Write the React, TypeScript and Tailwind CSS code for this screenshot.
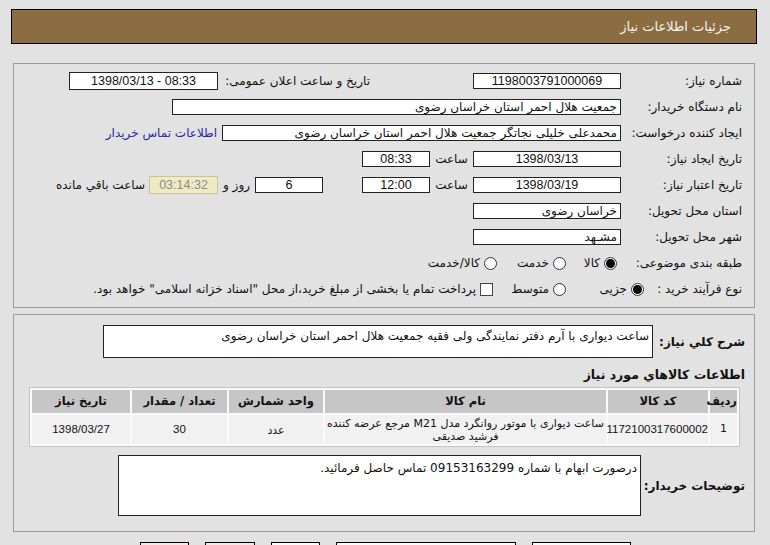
import React from "react";

function Radio({ checked }: { checked?: boolean }) {
  return (
    <span className="flex h-[13px] w-[13px] shrink-0 items-center justify-center rounded-full border border-[#333] bg-white">
      {checked && <span className="h-[9px] w-[9px] rounded-full bg-black" />}
    </span>
  );
}

function Box({ w, children, center, h = "h-[16px]" }: { w: string; children?: React.ReactNode; center?: boolean; h?: string }) {
  return (
    <div
      className={`${w} ${h} flex shrink-0 items-center overflow-hidden whitespace-nowrap border border-[#222] bg-white px-[3px] leading-none ${
        center ? "justify-center" : "justify-start"
      }`}
    >
      {children}
    </div>
  );
}

function Num({ children, small }: { children: React.ReactNode; small?: boolean }) {
  return (
    <span dir="ltr" className={`font-['Liberation_Sans',sans-serif] ${small ? "text-[11.5px]" : "text-[12.5px]"}`}>
      {children}
    </span>
  );
}

function Label({ w, children }: { w: string; children: React.ReactNode }) {
  return <div className={`${w} shrink-0 whitespace-nowrap text-right`}>{children}</div>;
}

const cols = [
  { title: "ردیف", w: "w-[27px]" },
  { title: "کد کالا", w: "w-[100px]" },
  { title: "نام کالا", w: "w-[281px]" },
  { title: "واحد شمارش", w: "w-[94px]" },
  { title: "تعداد / مقدار", w: "w-[95px]" },
  { title: "تاریخ نیاز", w: "w-[98px]" },
];

export default function App() {
  return (
    <div
      dir="rtl"
      className="relative h-[545px] w-[770px] overflow-hidden bg-[#e2e2e2] pt-[9px] font-['Tahoma','DejaVu_Sans',sans-serif] text-[12px] text-[#111]"
    >
      {/* header bar */}
      <div className="ml-[11px] mr-[13px] flex h-[35px] items-center border border-black bg-[#8c6d41] pr-[25px] text-[13px] text-[#f3f3f3]">
        جزئیات اطلاعات نیاز
      </div>

      {/* main info panel */}
      <div className="ml-[13px] mr-[15px] mt-[19px] h-[245px] border border-[#9c9c9c] pr-[12px] pt-[4px]">
        <div className="flex h-[26px] items-center">
          <Label w="w-[121px]">شماره نیاز:</Label>
          <Box w="w-[148px]" center><Num>1198003791000069</Num></Box>
          <Label w="w-[138px] mr-[103px]">تاریخ و ساعت اعلان عمومی:</Label>
          <div className="mr-[14px]">
            <Box w="w-[149px]" h="h-[18px]" center>
              <Num>1398/03/13 - 08:33</Num>
            </Box>
          </div>
        </div>

        <div className="flex h-[26px] items-center">
          <Label w="w-[121px]">نام دستگاه خریدار:</Label>
          <Box w="w-[449px]">جمعیت هلال احمر استان خراسان رضوی</Box>
        </div>

        <div className="flex h-[26px] items-center">
          <Label w="w-[121px]">ایجاد کننده درخواست:</Label>
          <Box w="w-[399px]">محمدعلی خلیلی نجاتگر جمعیت هلال احمر استان خراسان رضوی</Box>
          <a className="mr-[5px] whitespace-nowrap text-[#2a2aa0]">اطلاعات تماس خریدار</a>
        </div>

        <div className="flex h-[26px] items-center">
          <Label w="w-[121px]">تاریخ ایجاد نیاز:</Label>
          <Box w="w-[148px]" center><Num>1398/03/13</Num></Box>
          <div className="w-[43px] shrink-0 text-center">ساعت</div>
          <Box w="w-[68px]" center><Num>08:33</Num></Box>
        </div>

        <div className="flex h-[26px] items-center">
          <Label w="w-[121px]">تاریخ اعتبار نیاز:</Label>
          <Box w="w-[148px]" center><Num>1398/03/19</Num></Box>
          <div className="w-[43px] shrink-0 text-center">ساعت</div>
          <Box w="w-[68px]" center><Num>12:00</Num></Box>
          <div className="mr-[39px]">
            <Box w="w-[68px]" center><Num>6</Num></Box>
          </div>
          <div className="w-[37px] shrink-0 text-center">روز و</div>
          <div className="flex h-[18px] w-[69px] shrink-0 items-center justify-center border border-[#c9c39a] bg-[#efeac4] text-[#8a8a8a]">
            <Num>03:14:32</Num>
          </div>
          <div className="mr-[4px] whitespace-nowrap">ساعت باقي مانده</div>
        </div>

        <div className="flex h-[26px] items-center">
          <Label w="w-[121px]">استان محل تحویل:</Label>
          <Box w="w-[148px]">خراسان رضوی</Box>
        </div>

        <div className="flex h-[26px] items-center">
          <Label w="w-[121px]">شهر محل تحویل:</Label>
          <Box w="w-[148px]">مشـهد</Box>
        </div>

        <div className="flex h-[26px] items-center">
          <Label w="w-[125px]">طبقه بندی موضوعی:</Label>
          <div className="flex w-[51px] shrink-0 items-center gap-[4px]">
            <Radio checked />
            <span>کالا</span>
          </div>
          <div className="flex w-[69px] shrink-0 items-center gap-[4px]">
            <Radio />
            <span>خدمت</span>
          </div>
          <div className="flex shrink-0 items-center gap-[4px]">
            <Radio />
            <span>کالا/خدمت</span>
          </div>
        </div>

        <div className="flex h-[26px] items-center">
          <Label w="w-[98px]">نوع فرآیند خرید :</Label>
          <div className="flex w-[78px] shrink-0 items-center gap-[4px]">
            <Radio checked />
            <span>جزیی</span>
          </div>
          <div className="flex w-[73px] shrink-0 items-center gap-[4px]">
            <Radio />
            <span>متوسط</span>
          </div>
          <span className="h-[13px] w-[13px] shrink-0 border border-[#444] bg-white" />
          <span className="mr-[4px] whitespace-nowrap">
            پرداخت تمام یا بخشی از مبلغ خرید،از محل "اسناد خزانه اسلامی" خواهد بود.
          </span>
        </div>
      </div>

      {/* description + items panel */}
      <div className="ml-[13px] mr-[15px] mt-[6px] h-[218px] border border-[#9c9c9c] pt-[10px]">
        <div className="flex items-center pr-[9px]">
          <div className="w-[92px] shrink-0 whitespace-nowrap text-right text-[12px] font-bold">شرح کلي نیاز:</div>
          <div className="h-[33px] w-[550px] shrink-0 border border-[#222] bg-white px-[3px] pt-[1px]">
            ساعت دیواری با آرم دفتر نمایندگی ولی فقیه جمعیت هلال احمر استان خراسان رضوی
          </div>
        </div>

        <div className="mt-[8px] whitespace-nowrap pr-[9px] text-[12.5px] font-bold leading-[17px]">اطلاعات کالاهاي مورد نیاز</div>

        <div className="mr-[14px] mt-[4px] w-[711px]">
          <table className="w-full table-fixed border-separate border-spacing-[2px] border border-[#c4c4c4] bg-[#fafafa]">
            <thead>
              <tr className="h-[23px]">
                {cols.map((c) => (
                  <th key={c.title} className={`${c.w} bg-[#c6c6c6] p-0 text-center text-[11.5px] font-bold`}>
                    {c.title}
                  </th>
                ))}
              </tr>
            </thead>
            <tbody className="text-[11px]">
              <tr className="h-[29px]">
                <td className="bg-[#f1f1f1] p-0 text-center">1</td>
                <td className="bg-[#f1f1f1] p-0 text-center">
                  <Num small>1172100317600002</Num>
                </td>
                <td className="bg-[#f1f1f1] px-[2px] py-0 text-center leading-[13px]">
                  ساعت دیواری با موتور روانگرد مدل M21 مرجع عرضه کننده فرشید صدیقی
                </td>
                <td className="bg-[#f1f1f1] p-0 pt-[4px] text-center">عدد</td>
                <td className="bg-[#f1f1f1] p-0 text-center">
                  <Num small>30</Num>
                </td>
                <td className="bg-[#f1f1f1] p-0 text-center">
                  <Num small>1398/03/27</Num>
                </td>
              </tr>
            </tbody>
          </table>
        </div>

        <div className="mt-[8px] flex items-center pr-[9px]">
          <div className="w-[104px] shrink-0 whitespace-nowrap text-right text-[12px] font-bold">توضیحات خریدار:</div>
          <div className="h-[61px] w-[523px] shrink-0 border border-[#222] bg-white px-[3px] pt-[3px]">
            درصورت ابهام با شماره 09153163299 تماس حاصل فرمائید.
          </div>
        </div>
      </div>

      {/* buttons (cut off) */}
      <div className="mr-[139px] mt-[10px] flex gap-[16px]">
        <div className="h-[20px] w-[99px] border border-black bg-[#fafafa]" />
        <div className="h-[20px] w-[180px] border border-black bg-[#fafafa]" />
        <div className="h-[20px] w-[49px] border border-black bg-[#fafafa]" />
        <div className="h-[20px] w-[50px] border border-black bg-[#fbe6e6]" />
        <div className="h-[20px] w-[49px] border border-black bg-[#fbe6e6]" />
      </div>
    </div>
  );
}
